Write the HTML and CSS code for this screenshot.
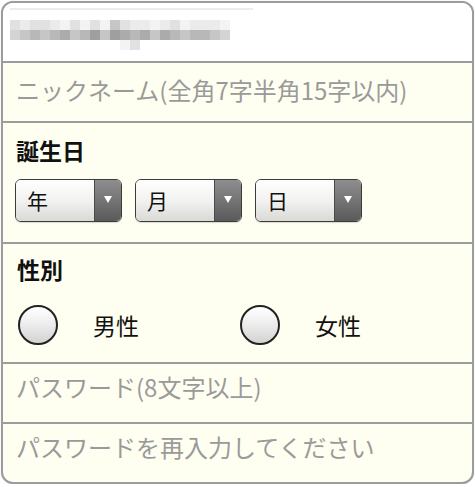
FILE: index.html
```html
<!DOCTYPE html>
<html lang="ja">
<head>
<meta charset="utf-8">
<title>登録フォーム</title>
<link rel="stylesheet" href="styles.css">
</head>
<body>
<div class="form">
  <div class="row row-top">
    <div class="blur-line"></div>
    <div class="px-row">
      <i class="g2"></i><i class="g1"></i><i class="g2"></i><i class="g2"></i><i class="g1"></i><i class="g0"></i><i class="g2"></i><i class="g0"></i><i class="g2"></i><i class="g0"></i><i class="g4"></i><i class="g2"></i><i class="g1"></i><i class="g1"></i><i class="g0"></i><i class="g1"></i><i class="g2"></i><i class="g0"></i><i class="g1"></i><i class="g1"></i><i class="g1"></i><i class="g0"></i>
    </div>
    <div class="px-row">
      <i class="g3"></i><i class="g4"></i><i class="g5"></i><i class="g4"></i><i class="g5"></i><i class="g6"></i><i class="g4"></i><i class="g5"></i><i class="g7"></i><i class="g4"></i><i class="g7"></i><i class="g6"></i><i class="g5"></i><i class="g6"></i><i class="g4"></i><i class="g6"></i><i class="g5"></i><i class="g4"></i><i class="g5"></i><i class="g5"></i><i class="g4"></i><i class="g3"></i>
    </div>
    <div class="px-row px-short">
      <i class="g0"></i><i class="g2"></i>
    </div>
  </div>
  <div class="row field field-first">ニックネーム(全角7字半角15字以内)</div>
  <div class="row group group-birth">
    <div class="label">誕生日</div>
    <div class="selects">
      <div class="select"><span class="sel-text">年</span><span class="sel-arrow"></span></div>
      <div class="select"><span class="sel-text">月</span><span class="sel-arrow"></span></div>
      <div class="select"><span class="sel-text">日</span><span class="sel-arrow"></span></div>
    </div>
  </div>
  <div class="row group group-sex">
    <div class="label">性別</div>
    <div class="radios">
      <label class="radio"><span class="circle"></span><span class="radio-text">男性</span></label>
      <label class="radio"><span class="circle"></span><span class="radio-text">女性</span></label>
    </div>
  </div>
  <div class="row field">パスワード(8文字以上)</div>
  <div class="row field">パスワードを再入力してください</div>
</div>
</body>
</html>
```
FILE: styles.css
```css
html, body {
  margin: 0;
  padding: 0;
  background: #ffffff;
}
body {
  font-family: "Noto Sans CJK JP", "Noto Sans", sans-serif;
}
.form {
  margin: 1px 0 0 1px;
  width: 473px;
  box-sizing: border-box;
  border: 2px solid #9c9c9c;
  border-radius: 12px;
  overflow: hidden;
  background: #fefff0;
  box-shadow: 0 0 1px rgba(0,0,0,0.25);
}
.row {
  box-sizing: border-box;
  border-top: 2px solid #9c9c9c;
}
.row-top {
  border-top: none;
  height: 58px;
  background: #ffffff;
  padding: 5px 0 0 7px;
}
.blur-line {
  width: 243px;
  height: 2px;
  background: #ececec;
  margin-bottom: 10px;
}
.px-row {
  display: flex;
  height: 10px;
}
.px-row i {
  display: block;
  width: 10px;
  height: 10px;
}
.px-short {
  padding-left: 110px;
}
.g0 { background: #f3f3f3; }
.g1 { background: #ebebeb; }
.g2 { background: #e1e1e1; }
.g3 { background: #d4d4d4; }
.g4 { background: #c6c6c6; }
.g5 { background: #b8b8b8; }
.g6 { background: #ababab; }
.g7 { background: #9f9f9f; }

.field {
  height: 60px;
  padding: 11px 0 0 13px;
  font-size: 24px;
  line-height: 24px;
  color: #9a9a9a;
  white-space: nowrap;
}
.field-first {
  padding-top: 15px;
}
.group-birth {
  height: 121px;
  padding: 16px 0 0 12px;
}
.group-sex {
  height: 120px;
  padding: 14px 0 0 15px;
}
.label {
  font-size: 23px;
  line-height: 23px;
  font-weight: bold;
  color: #111;
  padding-left: 1px;
}
.group-sex .label {
  margin-left: -2px;
}
.selects {
  display: flex;
  gap: 13px;
  margin-top: 17px;
}
.select {
  display: flex;
  width: 107px;
  height: 43px;
  box-sizing: border-box;
  border: 1px solid #3c3c3c;
  border-radius: 6px;
  overflow: hidden;
  box-shadow: 0 1px 1px rgba(0,0,0,0.15);
}
.sel-text {
  flex: 1;
  padding-left: 11px;
  font-size: 21px;
  line-height: 41px;
  color: #111;
  background: linear-gradient(#ffffff, #f2f2f0 50%, #d9d9d6);
}
.sel-arrow {
  width: 26px;
  border-left: 1px solid #4a4a4a;
  background: linear-gradient(#8e8e8e, #5a5a5a);
  display: flex;
  align-items: center;
  justify-content: center;
}
.sel-arrow::after {
  content: "";
  width: 0;
  height: 0;
  border-left: 4px solid transparent;
  border-right: 4px solid transparent;
  border-top: 7px solid #ffffff;
  margin-top: -3px;
}
.radios {
  display: flex;
  margin-top: 24px;
}
.radio {
  display: flex;
  align-items: center;
  width: 222px;
}
.circle {
  width: 40px;
  height: 40px;
  box-sizing: border-box;
  border: 2px solid #222;
  border-radius: 50%;
  background: linear-gradient(#ffffff, #ececec 50%, #d2d2d0);
}
.radio-text {
  margin-left: 35px;
  font-size: 23px;
  line-height: 23px;
  color: #111;
}
```
